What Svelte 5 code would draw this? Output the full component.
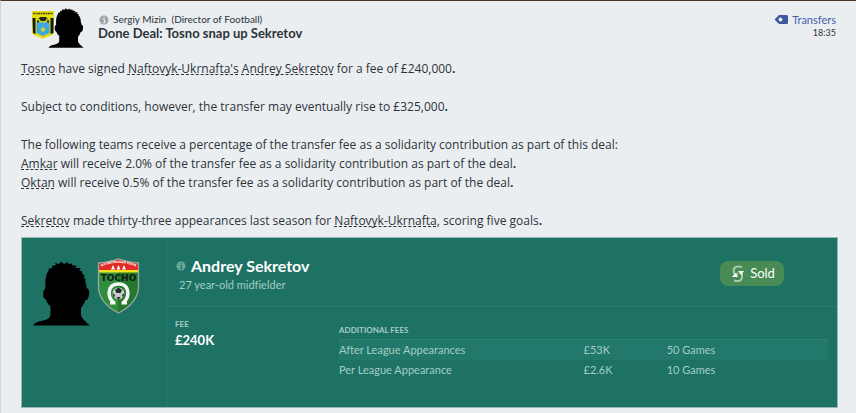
<script>
  const fees = [
    { label: 'After League Appearances', amount: '£53K', terms: '50 Games' },
    { label: 'Per League Appearance', amount: '£2.6K', terms: '10 Games' }
  ];
</script>

{#snippet head()}
  <svg class="head" viewBox="0 0 57 65" aria-hidden="true">
    <path
      d="M0 64.500C2 61 8 60 12 59C16 58 17.500 56 17.500 53V45C15 44 13.500 40 12.500 38C10 38 9.500 32 11 29L12.500 27C12 20 12.500 13 16 9L15 8L19 7L19 5L23 4L22 2L26 3L28 0.500L31 3L35 1L35 3L39 2.500L39 4L44 5L42 7L48 7L46 9L50 11L48.500 12L52 15L50.500 16L53 19L52 20L53.500 25V27C56.500 28 57 32 55.500 36C54.500 39 53.500 39 52.500 39C51.500 42 50 44.500 48 47V54C48.500 57 52 60 57 64.500Z"
    />
  </svg>
{/snippet}

{#snippet info()}
  <svg class="info" viewBox="0 0 10 10" aria-hidden="true">
    <circle cx="5" cy="5" r="4.500" />
    <path d="M4 4.300H5.500V7.500M3.800 7.700H6.500M4.500 2.500H5.800" />
  </svg>
{/snippet}

<main class="message">
  <header>
    <div class="sender-pic">
      <svg class="crest" viewBox="0 0 22 28" aria-hidden="true">
        <path d="M0 0H22V22C21 25 15 25 11 28C7 25 1 25 0 22Z" fill="#e5dd12" />
        <path d="M.5 7H3.500V23L1 22ZM18.500 7H21.500V22L18.500 23Z" fill="#151812" />
        <path d="M5 10L8 6H14L17 10V12H5Z" fill="#222415" />
        <path d="M4.500 12L9 10L11 12L13 10L17.500 12V22L11 25L4.500 22Z" fill="#3fa7df" />
        <path d="M1 2.500H21" stroke="#4d4a0e" stroke-width="1.500" stroke-dasharray="2 .5" />
        <path d="M7 8C7 12 15 12 15 8M11 16V21M8.500 18.500H13.500" fill="none" stroke="#e5dd12" stroke-width="1.500" />
      </svg>
      {@render head()}
    </div>
    <div class="heading">
      <p class="from">{@render info()}<span>Sergiy Mizin&nbsp; (Director of Football)</span></p>
      <h1>Done Deal: Tosno snap up Sekretov</h1>
    </div>
    <div class="meta">
      <a class="category" href="#transfers">
        <svg class="tag" viewBox="0 0 13 9" aria-hidden="true">
          <path fill-rule="evenodd" d="M4 0H11.500Q13 0 13 1.500V7.500Q13 9 11.500 9H4L0 5V4ZM5.500 2.500A2 2 0 1 0 5.500 6.500A2 2 0 1 0 5.500 2.500Z" />
        </svg>
        Transfers
      </a>
      <time>18:35</time>
    </div>
  </header>

  <article>
    <p><a href="#tosno">Tosno</a> have signed <a href="#naftovyk">Naftovyk-Ukrnafta's</a> <a href="#sekretov">Andrey Sekretov</a> for a fee of £240,000<b>.</b></p>
    <p>Subject to conditions, however, the transfer may eventually rise to £325,000<b>.</b></p>
    <p>
      The following teams receive a percentage of the transfer fee as a solidarity contribution as part of this deal:<br />
      <a href="#amkar">Amkar</a> will receive 2.0% of the transfer fee as a solidarity contribution as part of the deal<b>.</b><br />
      <a href="#oktan">Oktan</a> will receive 0.5% of the transfer fee as a solidarity contribution as part of the deal<b>.</b>
    </p>
    <p><a href="#sekretov">Sekretov</a> made thirty-three appearances last season for <a href="#naftovyk">Naftovyk-Ukrnafta</a>, scoring five goals<b>.</b></p>
  </article>

  <section class="card">
    <div class="pictures">
      {@render head()}
      <svg class="club" viewBox="0 0 43 56" aria-hidden="true">
        <clipPath id="shield"><path d="M1.500 5Q13 4 21.500 .8Q30 4 41.500 5V28C41.500 42 31 50 21.500 55C12 50 1.500 42 1.500 28Z" /></clipPath>
        <g clip-path="url(#shield)">
          <rect width="43" height="56" fill="#2f8d3c" />
          <path d="M21 12H43V50L21 56Z" fill="#24772f" />
          <rect width="43" height="13" fill="#e12b24" />
          <rect y="12" width="43" height="2.500" fill="#f3e51b" />
        </g>
        <path d="M1.500 5Q13 4 21.500 .8Q30 4 41.500 5V28C41.500 42 31 50 21.500 55C12 50 1.500 42 1.500 28Z" fill="none" stroke="#9aa7a0" stroke-width="1.300" />
        <path id="arc" d="M2.500 9.500Q21.500 .5 40.500 9.500" fill="none" />
        <text class="arc-text"><textPath href="#arc" startOffset="50%" text-anchor="middle">ФУТБОЛЬНЫЙ КЛУБ</textPath></text>
        <path d="M16 7L18 11.500H14ZM21.500 7L23.500 11.500H19.500ZM27 7L29 11.500H25Z" fill="#fff" />
        <text class="club-name" x="21.500" y="22.500" text-anchor="middle">ТОСНО</text>
        <path d="M17 45C9 38 11 26 21.500 26C32 26 34 38 26 45" fill="none" stroke="#f4f7f3" stroke-width="3.500" />
        <path d="M13 45H18.500M24.500 45H30" stroke="#f4f7f3" stroke-width="3" />
        <circle cx="21.500" cy="35.500" r="6" fill="#c7cbc8" />
        <path d="M18 32L21.500 29.500L25 32L23.500 35H19.500ZM15.500 35L18 37L17 40ZM27.500 35L25 37L26 40ZM19.500 39H23.500L21.500 42Z" fill="#242c28" />
      </svg>
    </div>
    <div class="details">
      <div class="player">
        <div>
          <h2>{@render info()}<span>Andrey Sekretov</span></h2>
          <p class="age">27 year-old midfielder</p>
        </div>
        <div class="status">
          <svg viewBox="0 0 12 18" aria-hidden="true">
            <path d="M10 2C5 .5 1.800 2 1.800 5V7.500C2 9 4 9.500 6 8.500" />
            <path d="M2 15.500C7 17 10 15.500 10 12V8" />
            <path class="arrow" d="M0 12L3.500 8L6 12ZM6 6H12L9 10Z" />
          </svg>
          Sold
        </div>
      </div>
      <div class="deal">
        <div>
          <h3>FEE</h3>
          <p class="fee">£240K</p>
        </div>
        <table>
          <caption>ADDITIONAL FEES</caption>
          <tbody>
            {#each fees as fee}
              <tr>
                <td>{fee.label}</td>
                <td>{fee.amount}</td>
                <td>{fee.terms}</td>
              </tr>
            {/each}
          </tbody>
        </table>
      </div>
    </div>
  </section>
</main>

<style>
  :global(body) {
    margin: 0;
    background: #ebeef1;
  }

  .message {
    padding: 0 18px 5px 20px;
    border-top: 1px solid #49391d;
    border-left: 1px solid #cbd4df;
    color: #2b3439;
    font: 13px/19px Lato, sans-serif;
    font-variant-ligatures: none;
  }

  h1, h2, h3, p {
    margin: 0;
  }

  svg {
    display: block;
    flex: none;
  }

  header {
    display: flex;
    padding-top: 7px;
    height: 50px;
    box-sizing: border-box;
  }

  .sender-pic {
    display: flex;
    width: 77px;
    padding-left: 11px;
    box-sizing: border-box;
  }

  .crest {
    width: 22px;
    height: 28px;
    margin-top: 3px;
  }

  .sender-pic .head {
    width: 36px;
    height: 40px;
    margin-left: -6px;
  }

  .heading {
    flex: 1;
    padding-top: 5px;
  }

  .from {
    display: flex;
    align-items: center;
    gap: 4px;
    font-size: 10px;
    line-height: 13px;
    padding-left: 1px;
  }

  .info {
    width: 10px;
    height: 10px;
    fill: #a0a4a7;
  }

  .info path {
    fill: none;
    stroke: #ebeef1;
  }

  h1 {
    font-size: 13px;
    line-height: 14px;
  }

  .meta {
    display: flex;
    flex-direction: column;
    align-items: flex-end;
    padding: 5px 2px 0 0;
    font-size: 9px;
    line-height: 13px;
  }

  .category {
    display: flex;
    align-items: center;
    gap: 4px;
    color: #4560a8;
    font-size: 11px;
    text-decoration: none;
  }

  .tag {
    width: 13px;
    height: 9px;
    fill: #3d589f;
  }

  article {
    display: grid;
    gap: 19px;
    padding: 8px 0 7px;
    font-family: "Open Sans", sans-serif;
    font-size: 12px;
  }

  article a {
    color: inherit;
    text-decoration: underline dashed 1px;
    text-decoration-skip-ink: none;
    text-underline-offset: 1px;
  }

  .card {
    display: grid;
    grid-template-columns: 144px 1fr;
    min-height: 169px;
    border: 1px solid #9bb5b4;
    background: #1d7264;
    color: #a4cdc4;
    font-size: 11px;
  }

  .pictures {
    display: flex;
    gap: 7px;
    padding: 19px 0 0 11px;
  }

  .pictures .head {
    width: 57px;
    height: 65px;
    margin-top: 4px;
  }

  .club {
    width: 43px;
    height: 58px;
  }

  .club-name {
    fill: #101a14;
    font: bold 9px "DejaVu Sans", sans-serif;
  }

  .arc-text {
    fill: #fff;
    font: bold 3px "DejaVu Sans", sans-serif;
  }

  .details {
    border-left: 1px solid #26806f;
  }

  .player {
    display: flex;
    justify-content: space-between;
    height: 69px;
    box-sizing: border-box;
    padding: 18px 53px 0 9px;
    border-bottom: 1px solid #26806f;
  }

  h2 {
    display: flex;
    align-items: center;
    gap: 5px;
    color: #fff;
    font-size: 16px;
    line-height: 20px;
  }

  h2 .info {
    fill: #6ca79a;
  }

  h2 .info path {
    stroke: #1d7264;
  }

  .age {
    padding-left: 3px;
    line-height: 18px;
  }

  .status {
    display: flex;
    align-items: center;
    justify-content: center;
    gap: 6px;
    width: 64px;
    height: 25px;
    margin-top: 5px;
    padding-left: 3px;
    box-sizing: border-box;
    border-radius: 8px;
    background: #488b54;
    color: #fff;
    font-size: 13px;
  }

  .status svg {
    width: 12px;
    height: 18px;
    fill: none;
    stroke: #a9cbae;
    stroke-width: 2;
  }

  .status .arrow {
    fill: #fff;
    stroke: none;
  }

  .deal {
    display: grid;
    grid-template-columns: 164px 1fr;
    padding: 11px 9px 0 8px;
  }

  h3, caption {
    font-size: 8px;
    font-weight: bold;
    line-height: 12px;
    text-align: left;
  }

  .fee {
    color: #fff;
    font-size: 13px;
    font-weight: bold;
    line-height: 20px;
  }

  table {
    width: 100%;
    margin-top: 6px;
    border-collapse: collapse;
    table-layout: fixed;
    align-self: start;
  }

  caption {
    padding-bottom: 3px;
  }

  td {
    height: 20px;
    padding: 0;
    line-height: 20px;
  }

  td:first-child {
    width: 50%;
  }

  td:nth-child(2) {
    width: 17%;
  }

  tr:first-child td {
    border-top: 1px solid #2b8272;
    background: #22786a;
  }
</style>
